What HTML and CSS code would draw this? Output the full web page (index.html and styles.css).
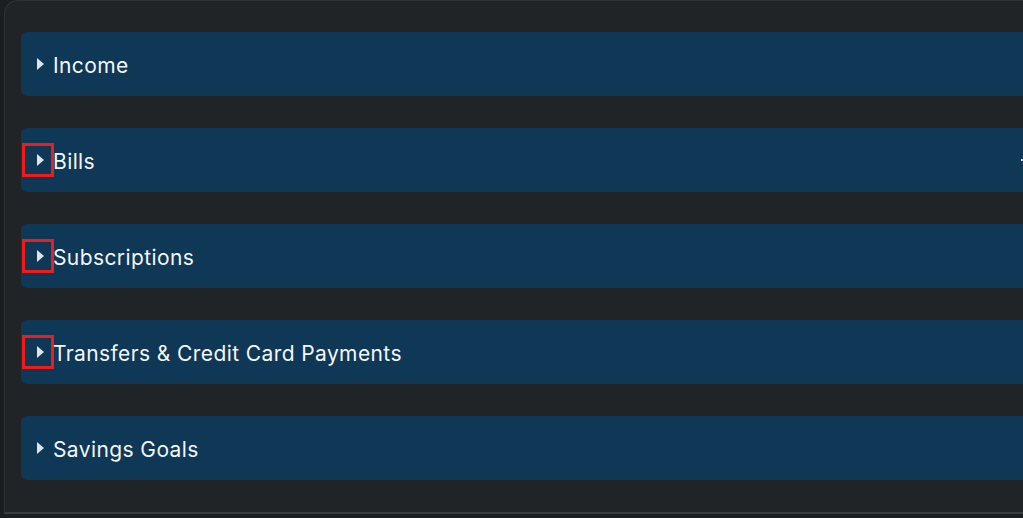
FILE: index.html
```html
<!DOCTYPE html>
<html>
<head>
<meta charset="utf-8">
<link rel="stylesheet" href="styles.css">
</head>
<body>
<div class="panel">
  <div class="bar"><span class="toggle"><span class="tri"></span></span><span class="label">Income</span></div>
  <div class="bar"><span class="toggle hl"><span class="tri"></span></span><span class="label">Bills</span><span class="edge"></span></div>
  <div class="bar"><span class="toggle hl"><span class="tri"></span></span><span class="label">Subscriptions</span></div>
  <div class="bar"><span class="toggle hl"><span class="tri"></span></span><span class="label">Transfers &amp; Credit Card Payments</span></div>
  <div class="bar"><span class="toggle"><span class="tri"></span></span><span class="label">Savings Goals</span></div>
</div>
</body>
</html>
```
FILE: styles.css
```css
html, body {
  margin: 0;
  padding: 0;
  background: #1b1e21;
  overflow: hidden;
  height: 518px;
}
.panel {
  margin-left: 4px;
  width: 1100px;
  background: #212427;
  border-left: 1px solid #2f3337;
  border-top: 1px solid #2f3337;
  border-bottom: 2px solid #383c41;
  border-top-left-radius: 14px;
  padding: 31px 0 32px 16px;
  display: flex;
  flex-direction: column;
  gap: 32px;
  box-sizing: border-box;
  height: 514px;
}
.bar {
  height: 64px;
  background: #0f3756;
  border-radius: 6px;
  display: flex;
  align-items: center;
  position: relative;
  font-family: "Inter", "Noto Sans", sans-serif;
  font-size: 21px;
  color: #f4f6f8;
}
.toggle {
  width: 32px;
  height: 34px;
  margin-left: 1px;
  box-sizing: border-box;
  border: 3px solid transparent;
  display: flex;
  align-items: center;
}
.toggle.hl {
  border-color: #ee1c1c;
}
.tri {
  width: 0;
  height: 0;
  margin-left: 12px;
  border-top: 6.5px solid transparent;
  border-bottom: 6.5px solid transparent;
  border-left: 7px solid #dfe2e6;
}
.label {
  letter-spacing: 0.4px;
  margin-left: -1px;
  position: relative;
  top: 1px;
}
.edge {
  position: absolute;
  left: 1000px;
  top: 31px;
  width: 3px;
  height: 2px;
  background: #cfd6dd;
}
```
